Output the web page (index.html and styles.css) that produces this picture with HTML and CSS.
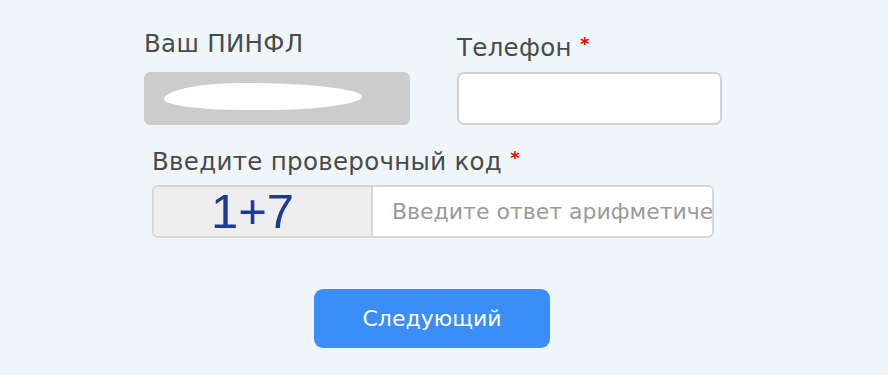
FILE: index.html
```html
<!DOCTYPE html>
<html lang="ru">
<head>
<meta charset="utf-8">
<link rel="stylesheet" href="styles.css">
</head>
<body>
<div class="page">
  <form class="form">
    <div class="row two">
      <div class="field">
        <label class="label">Ваш ПИНФЛ</label>
        <div class="readonly"><span class="redact"></span></div>
      </div>
      <div class="field">
        <label class="label">Телефон <span class="req">*</span></label>
        <div class="input"></div>
      </div>
    </div>
    <div class="row captcha-row">
      <label class="label">Введите проверочный код <span class="req">*</span></label>
      <div class="captcha">
        <div class="captcha-q">1+7</div>
        <div class="captcha-a"><span class="placeholder">Введите ответ арифметического выражения</span></div>
      </div>
    </div>
    <div class="actions">
      <button type="button" class="btn">Следующий</button>
    </div>
  </form>
</div>
</body>
</html>
```
FILE: styles.css
```css
html, body {
  margin: 0;
  padding: 0;
  background: #eff6fa;
}
.page {
  width: 888px;
  height: 375px;
  padding: 29px 0 0 144px;
  box-sizing: border-box;
  font-family: "DejaVu Sans", sans-serif;
  overflow: hidden;
}
.form {
  width: 578px;
}
.row.two {
  display: grid;
  grid-template-columns: 266px 265px;
  column-gap: 47px;
}
.field {
  display: flex;
  flex-direction: column;
}
.label {
  font-size: 24.5px;
  letter-spacing: 0.3px;
  color: #4a4a4a;
  line-height: 30px;
  height: 30px;
  margin-bottom: 13px;
  white-space: nowrap;
}
.req {
  color: #f00;
  font-size: 18px;
  font-weight: bold;
  vertical-align: 6px;
}
.readonly {
  height: 53px;
  background: #cccccc;
  border-radius: 6px;
  position: relative;
}
.redact {
  position: absolute;
  left: 20px;
  top: 11px;
  width: 198px;
  height: 27px;
  background: #fff;
  border-radius: 40% 60% 50% 40% / 60% 50% 50% 40%;
}
.input {
  height: 53px;
  background: #fff;
  border: 2px solid #d2d2d2;
  border-radius: 7px;
  box-sizing: border-box;
}
.captcha-row {
  padding: 0 8px;
  margin-top: 18px;
  display: flex;
  flex-direction: column;
}
.captcha-row .label {
  margin-bottom: 12px;
}
.captcha {
  display: flex;
  height: 53px;
  border: 2px solid #d6d6d6;
  border-radius: 6px;
  box-sizing: border-box;
  overflow: hidden;
}
.captcha-q {
  width: 219px;
  box-sizing: border-box;
  padding-left: 57px;
  background: #eeeeee;
  border-right: 2px solid #d6d6d6;
  font-family: "Liberation Sans", Arial, sans-serif;
  font-size: 49px;
  line-height: 49px;
  color: #1c3a9c;
}
.captcha-a {
  flex: 1;
  min-width: 0;
  background: #fff;
  padding-left: 19px;
  display: flex;
  align-items: center;
  overflow: hidden;
  white-space: nowrap;
}
.placeholder {
  font-size: 22px;
  color: #9a9a9a;
}
.actions {
  display: flex;
  justify-content: center;
  margin-top: 51px;
  padding-right: 2px;
}
.btn {
  width: 236px;
  height: 59px;
  border: none;
  border-radius: 9px;
  background: #3b8df8;
  color: #fff;
  font-family: "DejaVu Sans", sans-serif;
  font-size: 22px;
  padding: 0;
}
```
